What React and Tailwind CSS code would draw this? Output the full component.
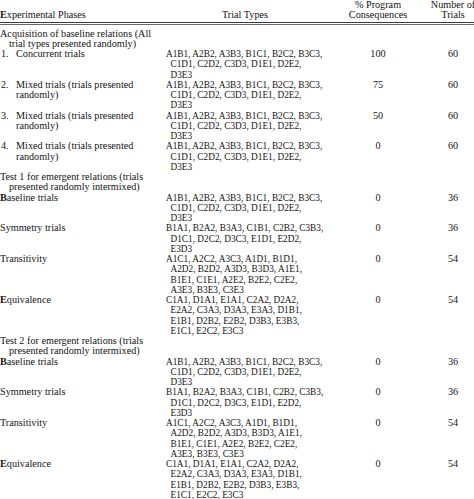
import React from 'react'

const TT_BASE = ['A1B1, A2B2, A3B3, B1C1, B2C2, B3C3,', 'C1D1, C2D2, C3D3, D1E1, D2E2,', 'D3E3']
const TT_SYM = ['B1A1, B2A2, B3A3, C1B1, C2B2, C3B3,', 'D1C1, D2C2, D3C3, E1D1, E2D2,', 'E3D3']
const TT_TRANS = ['A1C1, A2C2, A3C3, A1D1, B1D1,', 'A2D2, B2D2, A3D3, B3D3, A1E1,', 'B1E1, C1E1, A2E2, B2E2, C2E2,', 'A3E3, B3E3, C3E3']
const TT_EQUIV = ['C1A1, D1A1, E1A1, C2A2, D2A2,', 'E2A2, C3A3, D3A3, E3A3, D1B1,', 'E1B1, D2B2, E2B2, D3B3, E3B3,', 'E1C1, E2C2, E3C3']

const rows = [
  { kind: 'section', label: ['Acquisition of baseline relations (All', 'trial types presented randomly)'] },
  { kind: 'num', num: '1.', label: ['Concurrent trials'], types: TT_BASE, pct: '100', n: '60' },
  { kind: 'num', num: '2.', label: ['Mixed trials (trials presented', 'randomly)'], types: TT_BASE, pct: '75', n: '60' },
  { kind: 'num', num: '3.', label: ['Mixed trials (trials presented', 'randomly)'], types: TT_BASE, pct: '50', n: '60' },
  { kind: 'num', num: '4.', label: ['Mixed trials (trials presented', 'randomly)'], types: TT_BASE, pct: '0', n: '60' },
  { kind: 'section', label: ['Test 1 for emergent relations (trials', 'presented randomly intermixed)'] },
  { kind: 'plain', label: 'Baseline trials', bold: true, types: TT_BASE, pct: '0', n: '36' },
  { kind: 'plain', label: 'Symmetry trials', types: TT_SYM, pct: '0', n: '36' },
  { kind: 'plain', label: 'Transitivity', types: TT_TRANS, pct: '0', n: '54' },
  { kind: 'plain', label: 'Equivalence', bold: true, types: TT_EQUIV, pct: '0', n: '54' },
  { kind: 'section', label: ['Test 2 for emergent relations (trials', 'presented randomly intermixed)'] },
  { kind: 'plain', label: 'Baseline trials', bold: true, types: TT_BASE, pct: '0', n: '36' },
  { kind: 'plain', label: 'Symmetry trials', types: TT_SYM, pct: '0', n: '36' },
  { kind: 'plain', label: 'Transitivity', types: TT_TRANS, pct: '0', n: '54' },
  { kind: 'plain', label: 'Equivalence', bold: true, types: TT_EQUIV, pct: '0', n: '54' },
]

function FirstCell({ row }) {
  if (row.kind === 'section') {
    return (
      <div>
        <div>{row.label[0]}</div>
        <div className="pl-[9px]">{row.label[1]}</div>
      </div>
    )
  }
  if (row.kind === 'num') {
    return (
      <div className="flex">
        <span className="w-[16px] shrink-0 pl-px">{row.num}</span>
        <div>
          {row.label.map((l, i) => <div key={i}>{l}</div>)}
        </div>
      </div>
    )
  }
  return (
    <div>
      {row.bold ? <><span className="font-bold">{row.label[0]}</span>{row.label.slice(1)}</> : row.label}
    </div>
  )
}

export default function App() {
  return (
    <div className="w-[474px] h-[499px] overflow-hidden bg-white text-[#141414]" style={{ fontFamily: "'Liberation Serif', 'Times New Roman', serif" }}>
      <div className="w-[474px] leading-[10.25px] text-[10.2px]">

        {/* header */}
        <div className="grid grid-cols-[166px_158px_108px_42px] items-end">
          <div><span className="font-bold">E</span>xperimental Phases</div>
          <div className="text-center">Trial Types</div>
          <div className="text-center">
            <div>% Program</div>
            <div>Consequences</div>
          </div>
          <div className="flex flex-col items-center whitespace-nowrap">
            <div>Number of</div>
            <div>Trials</div>
          </div>
        </div>

        <div className="mt-[1.5px] h-[1.2px] bg-[#3a3a3a]" />
        <div className="mt-[1.3px] h-px bg-[#6a6a6a]" />

        <div className="pt-[3.2px]">
          {rows.map((row, i) => (
            <div key={i} className="grid grid-cols-[166px_158px_108px_42px] items-start">
              <div className="whitespace-nowrap">
                <FirstCell row={row} />
              </div>
              <div className="whitespace-nowrap text-[9.3px]">
                {row.types && row.types.map((t, j) => (
                  <div key={j} className={j > 0 ? 'pl-[4.5px]' : ''}>{t}</div>
                ))}
              </div>
              <div className="text-center">{row.pct}</div>
              <div className="text-center">{row.n}</div>
            </div>
          ))}
        </div>

      </div>
    </div>
  )
}
